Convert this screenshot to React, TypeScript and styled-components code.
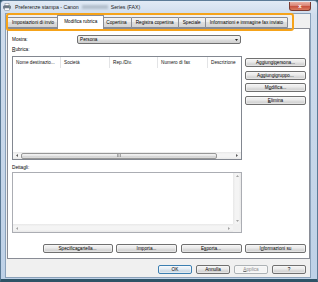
import React from "react";
import styled, { createGlobalStyle } from "styled-components";

const GlobalStyle = createGlobalStyle`
  html, body { margin: 0; padding: 0; }
  body {
    width: 318px; height: 282px; overflow: hidden;
    background: #2e5366;
    font-family: "Liberation Sans", Arial, sans-serif;
  }
  * { box-sizing: border-box; }
`;

const Window = styled.div`
  width: 318px;
  height: 282px;
  display: flex;
  flex-direction: column;
  background: linear-gradient(180deg, #e1eaf5 0px, #cfdcec 14px, #bed1e7 100%);
  border: 1px solid #5b7a96;
  border-bottom: 3px solid #2e5366;
  border-radius: 4px 4px 0 0;
`;

const TitleBar = styled.div`
  height: 12px;
  flex: none;
  display: flex;
  align-items: center;
  padding-left: 2px;
`;

const TitleText = styled.span`
  font-size: 5.2px;
  color: #1a1a1a;
  margin-left: 4px;
  white-space: nowrap;
  display: flex;
  align-items: center;
`;

const Redacted = styled.span`
  display: inline-block;
  width: 26px;
  height: 4px;
  margin: 0 3px;
  background: #b3bfcc;
  filter: blur(1px);
`;

const CloseButton = styled.div`
  margin-left: auto;
  margin-right: 6px;
  align-self: flex-start;
  margin-top: 1px;
  width: 22px;
  height: 9px;
  border: 1px solid #7a3a30;
  border-top: none;
  border-radius: 0 0 3px 3px;
  background: linear-gradient(180deg, #eab2a6 0%, #d98576 45%, #c8523f 55%, #d97a5f 100%);
  display: flex;
  align-items: center;
  justify-content: center;
  color: #fff;
  font-size: 6px;
  font-weight: bold;
  line-height: 1;
`;

const Client = styled.div`
  flex: 1;
  margin: 0 6px 1px 4px;
  background: #f0f0f0;
  border: 1px solid #8aa1ba;
  display: flex;
  flex-direction: column;
  padding: 0 0 0 1px;
  position: relative;
`;

const Highlight = styled.div`
  position: absolute;
  left: 0;
  top: -1px;
  width: 288px;
  height: 18px;
  border: 2px solid #f5a31a;
  border-radius: 3px;
  pointer-events: none;
  z-index: 3;
`;

const TabRow = styled.div`
  height: 14px;
  flex: none;
  display: flex;
  align-items: flex-end;
  position: relative;
  z-index: 1;
`;

const Tab = styled.div<{ $selected?: boolean }>`
  height: ${(p) => (p.$selected ? 14 : 11)}px;
  margin: ${(p) => (p.$selected ? "0 -2px -1px -2px" : "0 0 0 -1px")};
  padding: 0 ${(p) => (p.$selected ? 6 : 4)}px;
  border: 1px solid #898c95;
  border-bottom: ${(p) => (p.$selected ? "none" : "1px solid #898c95")};
  border-radius: 1px 1px 0 0;
  background: ${(p) =>
    p.$selected
      ? "#ffffff"
      : "linear-gradient(180deg, #f3f3f3 0%, #ebebeb 50%, #dedede 50%, #d3d3d3 100%)"};
  font-size: 4.7px;
  color: #000;
  white-space: nowrap;
  display: flex;
  align-items: center;
  padding-bottom: ${(p) => (p.$selected ? 2 : 0)}px;
  position: relative;
  z-index: ${(p) => (p.$selected ? 2 : 1)};
  &:first-child { margin-left: 0; }
`;

const Page = styled.div`
  height: 231px;
  flex: none;
  background: #fff;
  border: 1px solid #898c95;
  padding: 6px 3px 5px 4px;
  display: flex;
  flex-direction: column;
`;

const FieldRow = styled.div`
  height: 9px;
  display: flex;
  align-items: center;
`;

const Label = styled.div<{ $mt?: number; $w?: number }>`
  font-size: 4.7px;
  color: #000;
  height: 8px;
  line-height: 8px;
  margin-top: ${(p) => p.$mt ?? 0}px;
  width: ${(p) => (p.$w ? `${p.$w}px` : "auto")};
  white-space: nowrap;
  flex: none;
`;

const Combo = styled.div`
  width: 164px;
  height: 9px;
  border: 1px solid #707070;
  border-radius: 2px;
  background: linear-gradient(180deg, #f2f2f2 0%, #ebebeb 45%, #dddddd 55%, #cfcfcf 100%);
  display: flex;
  align-items: center;
  padding-left: 2px;
  font-size: 4.7px;
  color: #000;
`;

const ComboArrow = styled.span`
  margin-left: auto;
  width: 7px;
  height: 100%;
  display: flex;
  align-items: center;
  justify-content: center;
`;

const ContentRow = styled.div`
  margin-top: 2px;
  height: 104px;
  display: flex;
  gap: 3px;
`;

const ListView = styled.div`
  width: 230px;
  height: 104px;
  border: 1px solid #828790;
  background: #fff;
  display: flex;
  flex-direction: column;
`;

const ListHeader = styled.div`
  height: 11px;
  display: flex;
  flex: none;
`;

const HeaderCell = styled.div<{ $w: number; $last?: boolean }>`
  width: ${(p) => p.$w}px;
  flex: none;
  border-right: ${(p) => (p.$last ? "none" : "1px solid #e3e4e6")};
  padding-left: 3px;
  font-size: 4.7px;
  color: #111;
  display: flex;
  align-items: center;
  white-space: nowrap;
  overflow: hidden;
`;

const ListBody = styled.div`
  flex: 1;
`;

const HScroll = styled.div`
  height: 7px;
  flex: none;
  display: flex;
  align-items: stretch;
  background: linear-gradient(180deg, #e8e8e8 0%, #f4f4f4 30%, #f4f4f4 70%, #e8e8e8 100%);
`;

const ScrollArrow = styled.div<{ $size?: number }>`
  width: ${(p) => p.$size ?? 8}px;
  flex: none;
  display: flex;
  align-items: center;
  justify-content: center;
`;

const Thumb = styled.div`
  width: 196px;
  flex: none;
  margin: 0.5px 0;
  border: 1px solid #979797;
  border-radius: 2px;
  background: linear-gradient(180deg, #f4f4f4 0%, #e6e6e6 50%, #d6d6d6 51%, #dcdcdc 100%);
  display: flex;
  align-items: center;
  justify-content: center;
`;

const Track = styled.div`
  flex: 1;
`;

const SideButtons = styled.div`
  width: 61px;
  padding-top: 2px;
  display: flex;
  flex-direction: column;
  gap: 3.5px;
`;

const Button = styled.div<{ $w?: number; $default?: boolean; $disabled?: boolean }>`
  width: ${(p) => (p.$w ? `${p.$w}px` : "100%")};
  height: 9px;
  flex: none;
  border: 1px solid ${(p) => (p.$default ? "#3c7fb1" : p.$disabled ? "#adb2b5" : "#707070")};
  border-radius: 2px;
  background: ${(p) =>
    p.$disabled
      ? "#f4f4f4"
      : p.$default
      ? "linear-gradient(180deg, #f2f6fa 0%, #e6eef5 45%, #d5e0ea 55%, #cad8e4 100%)"
      : "linear-gradient(180deg, #f2f2f2 0%, #ebebeb 45%, #dddddd 55%, #cfcfcf 100%)"};
  box-shadow: inset 0 0 0 0.5px rgba(255, 255, 255, 0.8);
  font-size: 4.7px;
  color: ${(p) => (p.$disabled ? "#8d8d8d" : "#000")};
  display: flex;
  align-items: center;
  justify-content: center;
  white-space: nowrap;
`;

const Details = styled.div`
  width: 230px;
  height: 61px;
  border: 1px solid #abadb3;
  background: #fff;
  display: grid;
  grid-template-columns: 1fr 8px;
  grid-template-rows: 1fr 8px;
`;

const VScroll = styled.div`
  background: linear-gradient(90deg, #e8e8e8 0%, #f4f4f4 30%, #f4f4f4 70%, #e8e8e8 100%);
  display: flex;
  flex-direction: column;
  justify-content: space-between;
  align-items: center;
  padding: 2px 0;
`;

const HScrollPlain = styled.div`
  background: linear-gradient(180deg, #e8e8e8 0%, #f4f4f4 30%, #f4f4f4 70%, #e8e8e8 100%);
  display: flex;
  justify-content: space-between;
  align-items: center;
  padding: 0 3px;
`;

const Corner = styled.div`
  background: #f0f0f0;
`;

const ButtonRow = styled.div<{ $mt: number; $mr?: number; $gap: number }>`
  margin-top: ${(p) => p.$mt}px;
  margin-right: ${(p) => p.$mr ?? 0}px;
  height: 9px;
  flex: none;
  display: flex;
  justify-content: flex-end;
  gap: ${(p) => p.$gap}px;
`;

const U = styled.span`
  text-decoration: underline;
  text-decoration-thickness: 0.3px;
  text-decoration-color: rgba(0, 0, 0, 0.55);
  text-underline-offset: 0.4px;
`;

const Tri = ({ dir, color = "#5c5c5c" }: { dir: "l" | "r" | "u" | "d"; color?: string }) => {
  const pts = {
    l: "3,0 0,1.5 3,3",
    r: "0,0 3,1.5 0,3",
    u: "0,3 1.5,0 3,3",
    d: "0,0 3,0 1.5,3",
  }[dir];
  const horiz = dir === "l" || dir === "r";
  return (
    <svg width={horiz ? 2 : 3} height={horiz ? 3 : 2} viewBox="0 0 3 3" preserveAspectRatio="none">
      <polygon points={pts} fill={color} />
    </svg>
  );
};

const PrinterIcon = () => (
  <svg width="8" height="8" viewBox="0 0 16 16">
    <rect x="4" y="1" width="8" height="5" fill="#fff" stroke="#7d8791" strokeWidth="1" />
    <rect x="1" y="5.5" width="14" height="6" rx="1.5" fill="#6d7b89" stroke="#4a5561" strokeWidth="1" />
    <rect x="3.5" y="10" width="9" height="5" fill="#fafafa" stroke="#7d8791" strokeWidth="1" />
    <rect x="12" y="7" width="1.5" height="1.2" fill="#9fdc7a" />
  </svg>
);

const Grip = () => (
  <svg width="4" height="3" viewBox="0 0 4 3">
    <rect x="0" y="0" width="0.6" height="3" fill="#7a7a7a" />
    <rect x="1.6" y="0" width="0.6" height="3" fill="#7a7a7a" />
    <rect x="3.2" y="0" width="0.6" height="3" fill="#7a7a7a" />
  </svg>
);

export default function App() {
  return (
    <>
      <GlobalStyle />
      <Window>
        <TitleBar>
          <PrinterIcon />
          <TitleText>
            Preferenze stampa - Canon
            <Redacted />
            Series (FAX)
          </TitleText>
          <CloseButton>x</CloseButton>
        </TitleBar>
        <Client>
          <Highlight />
          <TabRow>
            <Tab>Impostazioni di invio</Tab>
            <Tab $selected>Modifica rubrica</Tab>
            <Tab>Copertina</Tab>
            <Tab>Registra copertina</Tab>
            <Tab>Speciale</Tab>
            <Tab>Informazioni e immagine fax inviato</Tab>
          </TabRow>
          <Page>
            <FieldRow>
              <Label $w={65}>
                <U>M</U>ostra:
              </Label>
              <Combo>
                Persona
                <ComboArrow>
                  <Tri dir="d" color="#222" />
                </ComboArrow>
              </Combo>
            </FieldRow>
            <Label $mt={2}>
              <U>R</U>ubrica:
            </Label>
            <ContentRow>
              <ListView>
                <ListHeader>
                  <HeaderCell $w={48}>Nome destinazio...</HeaderCell>
                  <HeaderCell $w={49}>Società</HeaderCell>
                  <HeaderCell $w={48}>Rep./Div.</HeaderCell>
                  <HeaderCell $w={50}>Numero di fax</HeaderCell>
                  <HeaderCell $w={33} $last>
                    Descrizione
                  </HeaderCell>
                </ListHeader>
                <ListBody />
                <HScroll>
                  <ScrollArrow>
                    <Tri dir="l" />
                  </ScrollArrow>
                  <Thumb>
                    <Grip />
                  </Thumb>
                  <Track />
                  <ScrollArrow>
                    <Tri dir="r" />
                  </ScrollArrow>
                </HScroll>
              </ListView>
              <SideButtons>
                <Button>
                  Aggiungi <U>p</U>ersona...
                </Button>
                <Button>
                  Aggiungi <U>g</U>ruppo...
                </Button>
                <Button>
                  M<U>o</U>difica...
                </Button>
                <Button>
                  <U>E</U>limina
                </Button>
              </SideButtons>
            </ContentRow>
            <Label $mt={4}>
              Detta<U>g</U>li:
            </Label>
            <Details>
              <div />
              <VScroll>
                <Tri dir="u" color="#a3a3a3" />
                <Tri dir="d" color="#a3a3a3" />
              </VScroll>
              <HScrollPlain>
                <Tri dir="l" color="#a3a3a3" />
                <Tri dir="r" color="#a3a3a3" />
              </HScrollPlain>
              <Corner />
            </Details>
            <ButtonRow $mt={11} $gap={3.5}>
              <Button $w={70}>
                Specifica <U>c</U>artella...
              </Button>
              <Button $w={61}>
                Im<U>p</U>orta...
              </Button>
              <Button $w={61}>
                E<U>s</U>porta...
              </Button>
              <Button $w={61}>
                I<U>n</U>formazioni su
              </Button>
            </ButtonRow>
          </Page>
          <ButtonRow $mt={6} $mr={4} $gap={4}>
            <Button $w={34} $default>
              OK
            </Button>
            <Button $w={34}>Annulla</Button>
            <Button $w={34} $disabled>
              <U>A</U>pplica
            </Button>
            <Button $w={34}>?</Button>
          </ButtonRow>
        </Client>
      </Window>
    </>
  );
}
